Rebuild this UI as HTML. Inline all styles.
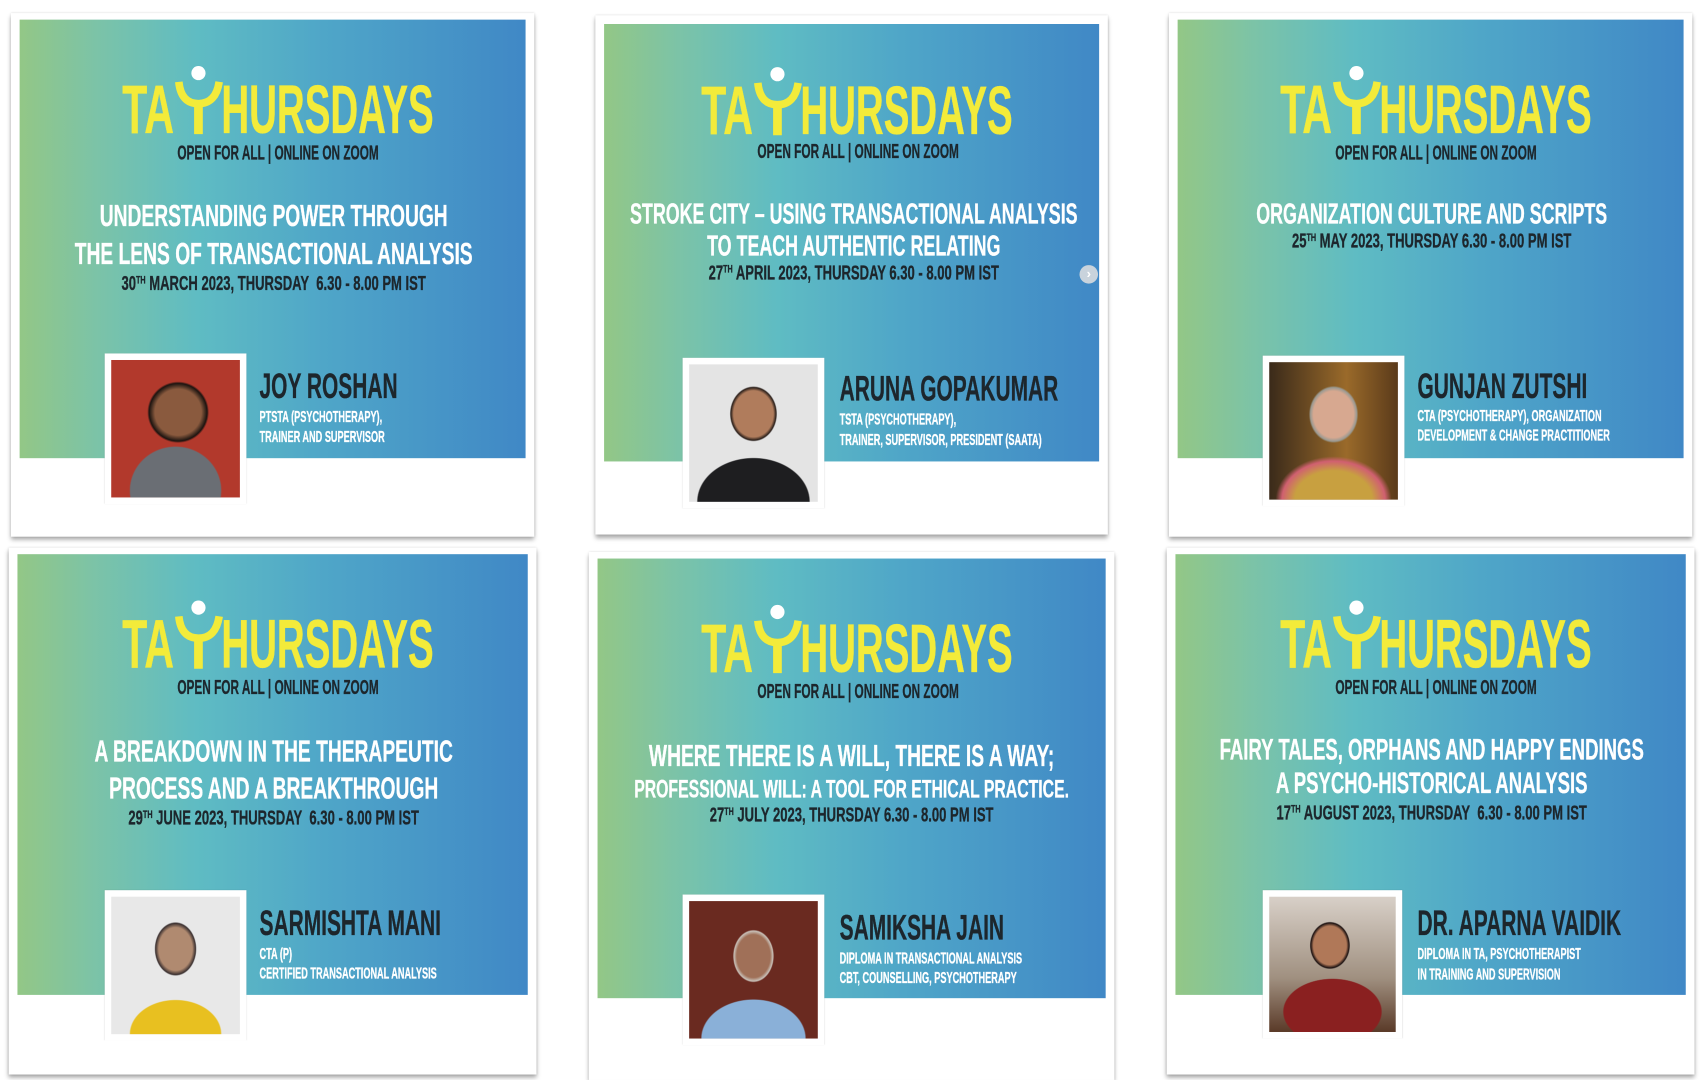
<!DOCTYPE html>
<html><head><meta charset="utf-8">
<style>
html,body{margin:0;padding:0;background:#fff;width:1701px;height:1080px;overflow:hidden}
#w{position:absolute;left:0;top:0;width:1560px;height:990px;transform-origin:0 0;transform:scale(1.0904,1.0909)}
.card{position:absolute;background:#fff;box-shadow:0 3px 4px rgba(0,0,0,.35),0 0 2px rgba(0,0,0,.15)}
.g{position:absolute;background:linear-gradient(90deg,#93c786 0%,#7cc3a7 15%,#5fbcc3 35%,#4fa6c8 60%,#4088c6 100%)}
.t{position:absolute;white-space:nowrap;font-family:"Liberation Sans",sans-serif;font-weight:bold;line-height:1;transform:scaleX(.6);transform-origin:center;-webkit-text-stroke:.3px currentColor}
.c{text-align:center;width:1000px;margin-left:-500px;transform:scaleX(.63)}
.s{transform:scaleX(.57)}
.l{transform-origin:left center}
.w{color:#fff}.d{color:#1d262c}.y{color:#f3eb3a}
.ph{position:absolute;background:#fff;box-shadow:0 0 1px rgba(0,0,0,.2)}
.ph div{position:absolute;left:6px;top:6px;right:6px;bottom:6px}
.logo{position:absolute;width:290px;height:66px}
.logo .h{transform:scaleX(.56)}
sup{font-size:55%;vertical-align:0;position:relative;top:-0.55em}
</style></head><body><div id="w">

<!-- Card 1 -->
<div class="card" style="left:10px;top:12px;width:480px;height:480px"></div>
<div class="g" style="left:18px;top:18px;width:464px;height:402px"></div>
<div class="logo" style="left:110px;top:58px">
 <div class="t l y" style="left:2px;top:12px;font-size:63px">TA</div>
 <svg style="position:absolute;left:50px;top:0" width="46" height="66" viewBox="0 0 46 66"><circle cx="22" cy="9" r="6.5" fill="#fff"/><path d="M4,17 Q6,37 22,37 Q38,37 41,17" stroke="#f3eb3a" stroke-width="7" fill="none"/><path d="M22,36 V65" stroke="#f3eb3a" stroke-width="8"/></svg>
 <div class="t l y h" style="left:93px;top:12px;font-size:63px">HURSDAYS</div>
</div>
<div class="t c d s" style="left:255px;top:131px;font-size:19px">OPEN FOR ALL | ONLINE ON ZOOM</div>
<div class="t c w" style="left:251px;top:184px;font-size:28px">UNDERSTANDING POWER THROUGH</div>
<div class="t c w" style="left:251px;top:219px;font-size:28px">THE LENS OF TRANSACTIONAL ANALYSIS</div>
<div class="t c d" style="left:251px;top:251px;font-size:19px">30<sup>TH</sup> MARCH 2023, THURSDAY&nbsp; 6.30 - 8.00 PM IST</div>
<div class="ph" style="left:96px;top:324px;width:130px;height:138px"><div style="background:radial-gradient(ellipse 30% 28% at 52% 38%,#8a5a3e 0 60%,#1c1410 75%,transparent 80%),radial-gradient(ellipse 50% 45% at 50% 95%,#6a6e74 0 70%,transparent 72%),#b2392c"></div></div>
<div class="t l d" style="left:238px;top:338px;font-size:32px">JOY ROSHAN</div>
<div class="t l w" style="left:238px;top:375px;font-size:14px">PTSTA (PSYCHOTHERAPY),</div>
<div class="t l w" style="left:238px;top:393px;font-size:14px">TRAINER AND SUPERVISOR</div>

<!-- Card 2 -->
<div class="card" style="left:546px;top:14px;width:470px;height:476px"></div>
<div class="g" style="left:554px;top:22px;width:454px;height:401px"></div>
<div class="logo" style="left:641px;top:59px">
 <div class="t l y" style="left:2px;top:12px;font-size:63px">TA</div>
 <svg style="position:absolute;left:50px;top:0" width="46" height="66" viewBox="0 0 46 66"><circle cx="22" cy="9" r="6.5" fill="#fff"/><path d="M4,17 Q6,37 22,37 Q38,37 41,17" stroke="#f3eb3a" stroke-width="7" fill="none"/><path d="M22,36 V65" stroke="#f3eb3a" stroke-width="8"/></svg>
 <div class="t l y h" style="left:93px;top:12px;font-size:63px">HURSDAYS</div>
</div>
<div class="t c d s" style="left:787px;top:130px;font-size:19px">OPEN FOR ALL | ONLINE ON ZOOM</div>
<div class="t c w" style="left:783px;top:183px;font-size:26px">STROKE CITY – USING TRANSACTIONAL ANALYSIS</div>
<div class="t c w" style="left:783px;top:212px;font-size:26px">TO TEACH AUTHENTIC RELATING</div>
<div class="t c d" style="left:783px;top:241px;font-size:19px">27<sup>TH</sup> APRIL 2023, THURSDAY 6.30 - 8.00 PM IST</div>
<div style="position:absolute;left:990px;top:243px;width:17px;height:17px;border-radius:50%;background:#c9d3dc;color:#fff;font:bold 12px/17px 'Liberation Sans',sans-serif;text-align:center">›</div>
<div class="ph" style="left:626px;top:328px;width:130px;height:138px"><div style="background:radial-gradient(ellipse 22% 24% at 50% 36%,#b07c5c 0 70%,#2a1f1a 80%,transparent 84%),radial-gradient(ellipse 48% 35% at 50% 100%,#1e1e20 0 90%,transparent 92%),#e4e4e4"></div></div>
<div class="t l d" style="left:770px;top:340px;font-size:32px">ARUNA GOPAKUMAR</div>
<div class="t l w" style="left:770px;top:377px;font-size:14px">TSTA (PSYCHOTHERAPY),</div>
<div class="t l w" style="left:770px;top:396px;font-size:14px">TRAINER, SUPERVISOR, PRESIDENT (SAATA)</div>

<!-- Card 3 -->
<div class="card" style="left:1072px;top:12px;width:480px;height:480px"></div>
<div class="g" style="left:1080px;top:18px;width:464px;height:402px"></div>
<div class="logo" style="left:1172px;top:58px">
 <div class="t l y" style="left:2px;top:12px;font-size:63px">TA</div>
 <svg style="position:absolute;left:50px;top:0" width="46" height="66" viewBox="0 0 46 66"><circle cx="22" cy="9" r="6.5" fill="#fff"/><path d="M4,17 Q6,37 22,37 Q38,37 41,17" stroke="#f3eb3a" stroke-width="7" fill="none"/><path d="M22,36 V65" stroke="#f3eb3a" stroke-width="8"/></svg>
 <div class="t l y h" style="left:93px;top:12px;font-size:63px">HURSDAYS</div>
</div>
<div class="t c d s" style="left:1317px;top:131px;font-size:19px">OPEN FOR ALL | ONLINE ON ZOOM</div>
<div class="t c w" style="left:1313px;top:183px;font-size:26px">ORGANIZATION CULTURE AND SCRIPTS</div>
<div class="t c d" style="left:1313px;top:212px;font-size:19px">25<sup>TH</sup> MAY 2023, THURSDAY 6.30 - 8.00 PM IST</div>
<div class="ph" style="left:1158px;top:326px;width:130px;height:138px"><div style="background:radial-gradient(ellipse 24% 26% at 50% 38%,#d7a890 0 65%,#9a9a92 75%,transparent 80%),radial-gradient(ellipse 50% 35% at 50% 100%,#c8a040 0 60%,#d06070 80%,transparent 90%),linear-gradient(90deg,#3a2a1a,#9a6a2a 60%,#5a3a1a)"></div></div>
<div class="t l d" style="left:1300px;top:338px;font-size:32px">GUNJAN ZUTSHI</div>
<div class="t l w" style="left:1300px;top:374px;font-size:14px">CTA (PSYCHOTHERAPY), ORGANIZATION</div>
<div class="t l w" style="left:1300px;top:392px;font-size:14px">DEVELOPMENT &amp; CHANGE PRACTITIONER</div>

<!-- Card 4 -->
<div class="card" style="left:8px;top:502px;width:484px;height:483px"></div>
<div class="g" style="left:16px;top:508px;width:468px;height:404px"></div>
<div class="logo" style="left:110px;top:548px">
 <div class="t l y" style="left:2px;top:12px;font-size:63px">TA</div>
 <svg style="position:absolute;left:50px;top:0" width="46" height="66" viewBox="0 0 46 66"><circle cx="22" cy="9" r="6.5" fill="#fff"/><path d="M4,17 Q6,37 22,37 Q38,37 41,17" stroke="#f3eb3a" stroke-width="7" fill="none"/><path d="M22,36 V65" stroke="#f3eb3a" stroke-width="8"/></svg>
 <div class="t l y h" style="left:93px;top:12px;font-size:63px">HURSDAYS</div>
</div>
<div class="t c d s" style="left:255px;top:621px;font-size:19px">OPEN FOR ALL | ONLINE ON ZOOM</div>
<div class="t c w" style="left:251px;top:675px;font-size:28px">A BREAKDOWN IN THE THERAPEUTIC</div>
<div class="t c w" style="left:251px;top:709px;font-size:28px">PROCESS AND A BREAKTHROUGH</div>
<div class="t c d" style="left:251px;top:741px;font-size:19px">29<sup>TH</sup> JUNE 2023, THURSDAY&nbsp; 6.30 - 8.00 PM IST</div>
<div class="ph" style="left:96px;top:816px;width:130px;height:138px"><div style="background:radial-gradient(ellipse 20% 24% at 50% 38%,#b08a70 0 65%,#3a3030 78%,transparent 82%),radial-gradient(ellipse 50% 35% at 50% 100%,#e8c020 0 70%,transparent 72%),#e8e8e8"></div></div>
<div class="t l d" style="left:238px;top:830px;font-size:32px">SARMISHTA MANI</div>
<div class="t l w" style="left:238px;top:867px;font-size:14px">CTA (P)</div>
<div class="t l w" style="left:238px;top:885px;font-size:14px">CERTIFIED TRANSACTIONAL ANALYSIS</div>

<!-- Card 5 -->
<div class="card" style="left:540px;top:506px;width:482px;height:484px"></div>
<div class="g" style="left:548px;top:512px;width:466px;height:403px"></div>
<div class="logo" style="left:641px;top:552px">
 <div class="t l y" style="left:2px;top:12px;font-size:63px">TA</div>
 <svg style="position:absolute;left:50px;top:0" width="46" height="66" viewBox="0 0 46 66"><circle cx="22" cy="9" r="6.5" fill="#fff"/><path d="M4,17 Q6,37 22,37 Q38,37 41,17" stroke="#f3eb3a" stroke-width="7" fill="none"/><path d="M22,36 V65" stroke="#f3eb3a" stroke-width="8"/></svg>
 <div class="t l y h" style="left:93px;top:12px;font-size:63px">HURSDAYS</div>
</div>
<div class="t c d s" style="left:787px;top:625px;font-size:19px">OPEN FOR ALL | ONLINE ON ZOOM</div>
<div class="t c w" style="left:781px;top:679px;font-size:28px">WHERE THERE IS A WILL, THERE IS A WAY;</div>
<div class="t c w" style="left:781px;top:712px;font-size:23px">PROFESSIONAL WILL: A TOOL FOR ETHICAL PRACTICE.</div>
<div class="t c d" style="left:781px;top:738px;font-size:19px">27<sup>TH</sup> JULY 2023, THURSDAY 6.30 - 8.00 PM IST</div>
<div class="ph" style="left:626px;top:820px;width:130px;height:138px"><div style="background:radial-gradient(ellipse 20% 24% at 50% 40%,#a07058 0 65%,#c8c0b8 76%,transparent 80%),radial-gradient(ellipse 50% 35% at 50% 100%,#8ab0d8 0 80%,transparent 82%),#6a2a20"></div></div>
<div class="t l d" style="left:770px;top:834px;font-size:32px">SAMIKSHA JAIN</div>
<div class="t l w" style="left:770px;top:871px;font-size:14px">DIPLOMA IN TRANSACTIONAL ANALYSIS</div>
<div class="t l w" style="left:770px;top:889px;font-size:14px">CBT, COUNSELLING, PSYCHOTHERAPY</div>

<!-- Card 6 -->
<div class="card" style="left:1070px;top:502px;width:484px;height:483px"></div>
<div class="g" style="left:1078px;top:508px;width:468px;height:404px"></div>
<div class="logo" style="left:1172px;top:548px">
 <div class="t l y" style="left:2px;top:12px;font-size:63px">TA</div>
 <svg style="position:absolute;left:50px;top:0" width="46" height="66" viewBox="0 0 46 66"><circle cx="22" cy="9" r="6.5" fill="#fff"/><path d="M4,17 Q6,37 22,37 Q38,37 41,17" stroke="#f3eb3a" stroke-width="7" fill="none"/><path d="M22,36 V65" stroke="#f3eb3a" stroke-width="8"/></svg>
 <div class="t l y h" style="left:93px;top:12px;font-size:63px">HURSDAYS</div>
</div>
<div class="t c d s" style="left:1317px;top:621px;font-size:19px">OPEN FOR ALL | ONLINE ON ZOOM</div>
<div class="t c w" style="left:1313px;top:674px;font-size:27px">FAIRY TALES, ORPHANS AND HAPPY ENDINGS</div>
<div class="t c w" style="left:1313px;top:705px;font-size:27px">A PSYCHO-HISTORICAL ANALYSIS</div>
<div class="t c d" style="left:1313px;top:736px;font-size:19px">17<sup>TH</sup> AUGUST 2023, THURSDAY&nbsp; 6.30 - 8.00 PM IST</div>
<div class="ph" style="left:1158px;top:816px;width:128px;height:136px"><div style="background:radial-gradient(ellipse 20% 22% at 48% 36%,#b07858 0 65%,#1a1010 76%,transparent 80%),radial-gradient(ellipse 48% 30% at 50% 85%,#8a2020 0 80%,transparent 82%),linear-gradient(180deg,#d8d0c8 0%,#a09080 60%,#5a3a28 100%)"></div></div>
<div class="t l d" style="left:1300px;top:830px;font-size:32px">DR. APARNA VAIDIK</div>
<div class="t l w" style="left:1300px;top:867px;font-size:14px">DIPLOMA IN TA, PSYCHOTHERAPIST</div>
<div class="t l w" style="left:1300px;top:886px;font-size:14px">IN TRAINING AND SUPERVISION</div>

</div></body></html>
